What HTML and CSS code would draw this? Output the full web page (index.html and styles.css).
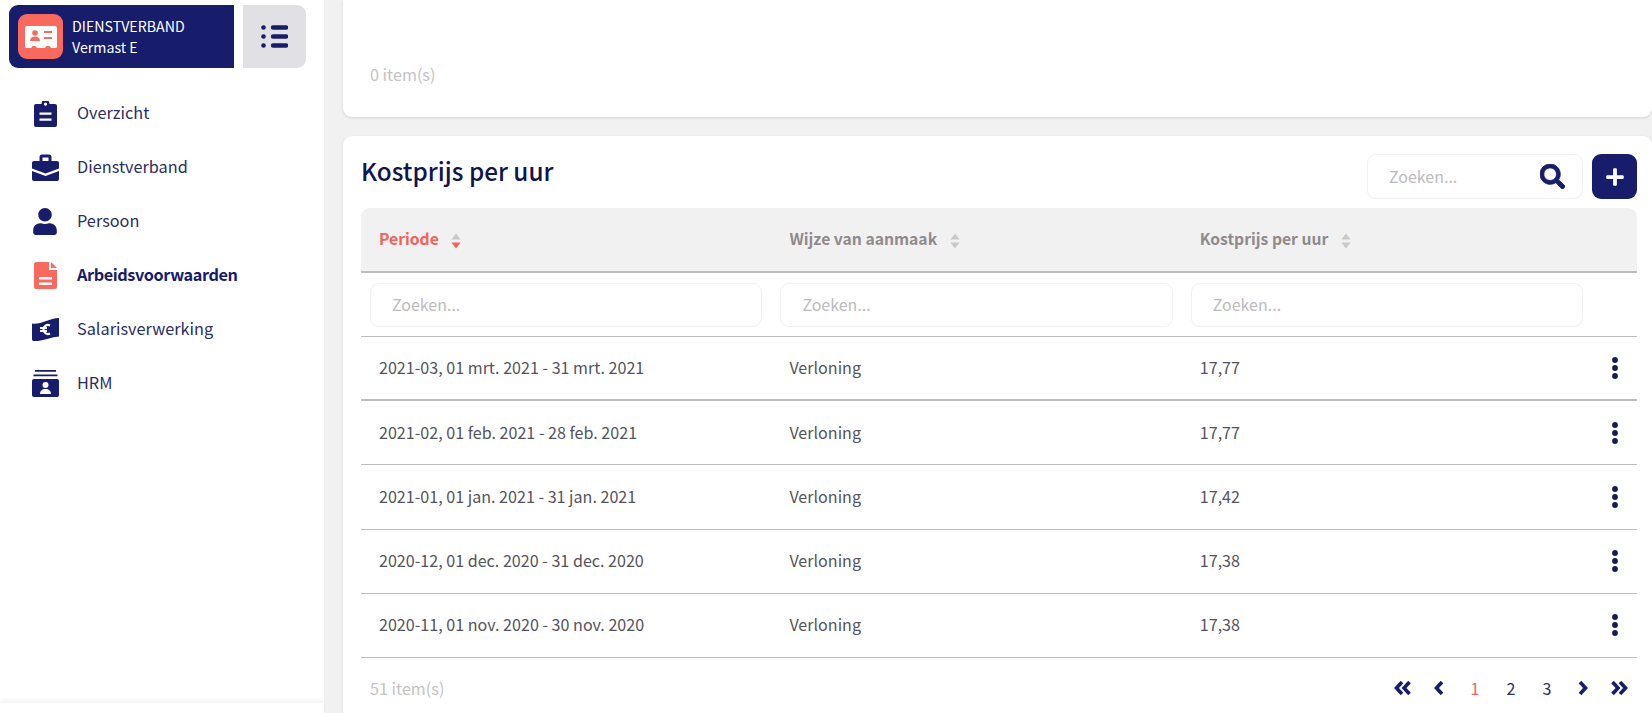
FILE: index.html
```html
<!DOCTYPE html>
<html lang="en">
<head>
    <meta charset="UTF-8">
    <title>Kostprijs per uur</title>
    <link rel="stylesheet" href="styles.css">
</head>
<body>
    <svg class="defs" width="0" height="0">
        <symbol id="dots" viewBox="0 0 8 22">
            <circle cx="4" cy="3" r="2.9"/><circle cx="4" cy="11" r="2.9"/><circle cx="4" cy="19" r="2.9"/>
        </symbol>
        <symbol id="sort" viewBox="0 0 10 16">
            <path class="up" d="M5 0.5L9.6 6.6H0.4z"/><path class="down" d="M5 15.5L9.6 9.4H0.4z"/>
        </symbol>
    </svg>

    <div class="layout">
        <!-- Sidebar -->
        <aside class="sidebar">
            <div class="sidebar-top">
                <div class="context">
                    <div class="context-logo">
                        <svg viewBox="0 0 32 22" width="32" height="22"><path fill="#fff" d="M2 0h28a2 2 0 0 1 2 2v18.500a1.500 1.500 0 0 1-1.500 1.500h-4.500l-1.500-2h-3l-1.500 2h-8l-1.500-2h-3l-1.500 2H1.500A1.500 1.500 0 0 1 0 20.500V2a2 2 0 0 1 2-2z"/><circle cx="10" cy="7" r="2.800" fill="#f96a5e"/><path fill="#f96a5e" d="M5 15c0-3 2-4.500 5-4.500s5 1.500 5 4.500z"/><path stroke="#f96a5e" stroke-width="2" d="M19 6h8M19 12h8"/></svg>
                    </div>
                    <div class="context-text">
                        <div>DIENSTVERBAND</div>
                        <div>Vermast E</div>
                    </div>
                </div>
                <button class="toggle">
                    <svg viewBox="0 0 27 23" width="27" height="23"><circle cx="2.500" cy="2.500" r="2.300"/><circle cx="2.500" cy="11.500" r="2.300"/><circle cx="2.500" cy="20.500" r="2.300"/><path d="M12 .3h13a2.200 2.200 0 0 1 0 4.400H12a2.200 2.200 0 0 1 0-4.400zM12 9.300h13a2.200 2.200 0 0 1 0 4.400H12a2.200 2.200 0 0 1 0-4.400zM12 18.300h13a2.200 2.200 0 0 1 0 4.400H12a2.200 2.200 0 0 1 0-4.400z"/></svg>
                </button>
            </div>
            <ul class="menu">
                <li>
                    <span class="menu-icon"><svg viewBox="0 0 23 26" width="23" height="26"><path fill-rule="evenodd" d="M7.500 3a4 4 0 0 1 8 0h5.500a2 2 0 0 1 2 2v19a2 2 0 0 1-2 2H2a2 2 0 0 1-2-2V5a2 2 0 0 1 2-2zM11.500 1.500a1.600 1.600 0 1 0 0 3.200 1.600 1.600 0 0 0 0-3.200zM5.500 11.500v2.200h12v-2.200zM5.500 17.500v2.200h12v-2.200z"/></svg></span>
                    Overzicht
                </li>
                <li>
                    <span class="menu-icon"><svg viewBox="0 0 27 27" width="27" height="27"><path fill-rule="evenodd" d="M7.500 7V3a2.500 2.500 0 0 1 2.500-2.500h7A2.500 2.500 0 0 1 19.500 3v4H25a2 2 0 0 1 2 2v5.500l-13.500 5-13.500-5V9a2 2 0 0 1 2-2zM10.500 3.500V7h6V3.500z"/><path d="M0 17l13.500 5L27 17v8a2 2 0 0 1-2 2H2a2 2 0 0 1-2-2z"/></svg></span>
                    Dienstverband
                </li>
                <li>
                    <span class="menu-icon"><svg viewBox="0 0 448 512" width="24" height="27"><path d="M224 256c70.700 0 128-57.300 128-128S294.700 0 224 0 96 57.300 96 128s57.300 128 128 128zm89.600 32h-16.700c-22.200 10.200-46.900 16-72.900 16s-50.600-5.800-72.900-16h-16.700C60.200 288 0 348.200 0 422.400V464c0 26.500 21.500 48 48 48h352c26.500 0 48-21.500 48-48v-41.600c0-74.200-60.200-134.400-134.400-134.400z"/></svg></span>
                    Persoon
                </li>
                <li class="active">
                    <span class="menu-icon"><svg viewBox="0 0 23 27" width="23" height="27"><path fill-rule="evenodd" d="M2 0h13v8h8v17a2 2 0 0 1-2 2H2a2 2 0 0 1-2-2V2a2 2 0 0 1 2-2zM5 15v2.500h13V15zM5 20.500V23h13v-2.500z"/><path d="M17 0l6 6h-6z"/></svg></span>
                    Arbeidsvoorwaarden
                </li>
                <li>
                    <span class="menu-icon"><svg viewBox="0 0 27 23" width="27" height="23"><path d="M0 5.500C8 7 17 .5 27 0v18.500C18 19 9 24 1.500 23 .5 23 0 22 0 21z"/><path fill="none" stroke="#fff" stroke-width="2.200" d="M18 7.500c-3-1.500-6.500 .5-6.500 4s3.500 5.500 6.500 4M8 10h7M8 13h7"/></svg></span>
                    Salarisverwerking
                </li>
                <li>
                    <span class="menu-icon"><svg viewBox="0 0 27 27" width="27" height="27"><path d="M3 0h21v1.800H3zM1.500 4.500h24v1.800h-24z"/><path fill-rule="evenodd" d="M2 9h23a2 2 0 0 1 2 2v14a2 2 0 0 1-2 2H2a2 2 0 0 1-2-2V11a2 2 0 0 1 2-2zM13.500 12a3 3 0 1 0 0 6 3 3 0 0 0 0-6zM8 24h11c0-3-2-5-5.500-5S8 21 8 24z"/></svg></span>
                    HRM
                </li>
            </ul>
            <div class="sidebar-foot"></div>
        </aside>

        <main class="content">
            <section class="card card-empty">
                <div class="item-count">0 item(s)</div>
            </section>

            <section class="card">
                <div class="card-head">
                    <h2>Kostprijs per uur</h2>
                    <div class="card-tools">
                        <div class="search">
                            <input type="text" placeholder="Zoeken...">
                            <svg viewBox="0 0 512 512" width="25" height="25"><path d="M505 442.700L405.300 343c-4.500-4.500-10.600-7-17-7H372c27.600-35.300 44-79.700 44-128C416 93.100 322.900 0 208 0S0 93.100 0 208s93.100 208 208 208c48.300 0 92.700-16.400 128-44v16.300c0 6.400 2.500 12.500 7 17l99.700 99.700c9.400 9.400 24.600 9.400 33.900 0l28.300-28.300c9.400-9.400 9.400-24.600.1-34zM208 336c-70.700 0-128-57.200-128-128 0-70.700 57.200-128 128-128 70.700 0 128 57.200 128 128 0 70.700-57.200 128-128 128z"/></svg>
                        </div>
                        <button class="add">
                            <svg viewBox="0 0 448 512" width="18" height="20"><path d="M416 208H272V64c0-17.670-14.330-32-32-32h-32c-17.670 0-32 14.330-32 32v144H32c-17.670 0-32 14.330-32 32v32c0 17.670 14.330 32 32 32h144v144c0 17.670 14.330 32 32 32h32c17.670 0 32-14.330 32-32V304h144c17.670 0 32-14.330 32-32v-32c0-17.670-14.330-32-32-32z"/></svg>
                        </button>
                    </div>
                </div>

                <table class="grid">
                    <thead>
                        <tr class="head-row">
                            <th class="sorted">Periode <svg class="sort-icon"><use href="#sort"/></svg></th>
                            <th>Wijze van aanmaak <svg class="sort-icon"><use href="#sort"/></svg></th>
                            <th>Kostprijs per uur <svg class="sort-icon"><use href="#sort"/></svg></th>
                            <th class="col-actions"></th>
                        </tr>
                        <tr class="filter-row">
                            <td><input type="text" placeholder="Zoeken..."></td>
                            <td><input type="text" placeholder="Zoeken..."></td>
                            <td><input type="text" placeholder="Zoeken..."></td>
                            <td></td>
                        </tr>
                    </thead>
                    <tbody>
                        <tr class="row-latest">
                            <td>2021-03, 01 mrt. 2021 - 31 mrt. 2021</td>
                            <td>Verloning</td>
                            <td>17,77</td>
                            <td class="col-actions"><svg class="dots"><use href="#dots"/></svg></td>
                        </tr>
                        <tr>
                            <td>2021-02, 01 feb. 2021 - 28 feb. 2021</td>
                            <td>Verloning</td>
                            <td>17,77</td>
                            <td class="col-actions"><svg class="dots"><use href="#dots"/></svg></td>
                        </tr>
                        <tr>
                            <td>2021-01, 01 jan. 2021 - 31 jan. 2021</td>
                            <td>Verloning</td>
                            <td>17,42</td>
                            <td class="col-actions"><svg class="dots"><use href="#dots"/></svg></td>
                        </tr>
                        <tr>
                            <td>2020-12, 01 dec. 2020 - 31 dec. 2020</td>
                            <td>Verloning</td>
                            <td>17,38</td>
                            <td class="col-actions"><svg class="dots"><use href="#dots"/></svg></td>
                        </tr>
                        <tr>
                            <td>2020-11, 01 nov. 2020 - 30 nov. 2020</td>
                            <td>Verloning</td>
                            <td>17,38</td>
                            <td class="col-actions"><svg class="dots"><use href="#dots"/></svg></td>
                        </tr>
                    </tbody>
                </table>

                <div class="card-foot">
                    <div class="item-count">51 item(s)</div>
                    <div class="pager">
                        <span><svg viewBox="0 0 18 14" width="18" height="14"><path d="M8 1L2.500 7 8 13M15.500 1L10 7l5.500 6"/></svg></span>
                        <span><svg viewBox="0 0 10 14" width="10" height="14"><path d="M8 1L2.500 7 8 13"/></svg></span>
                        <span class="current">1</span>
                        <span>2</span>
                        <span>3</span>
                        <span><svg viewBox="0 0 10 14" width="10" height="14"><path d="M2 1l5.500 6L2 13"/></svg></span>
                        <span><svg viewBox="0 0 18 14" width="18" height="14"><path d="M2.500 1L8 7l-5.500 6M10 1l5.500 6-5.500 6"/></svg></span>
                    </div>
                </div>
            </section>
        </main>
    </div>
</body>
</html>
```

FILE: styles.css
```css
* {
    margin: 0;
    padding: 0;
    box-sizing: border-box;
}

body {
    height: 713px;
    overflow: hidden;
    font-family: "Noto Sans CJK JP", "Noto Sans", sans-serif;
    font-size: 16px;
    line-height: 22px;
    color: #54545c;
    background: #f1f1f1;
}

input {
    font-family: inherit;
    font-size: 16px;
    color: #54545c;
    outline: none;
}

input::placeholder {
    color: #bdbbbd;
    opacity: 1;
}

button {
    border: none;
    cursor: pointer;
}

.defs {
    position: absolute;
}

.layout {
    display: flex;
    height: 713px;
}

/* Sidebar */
.sidebar {
    width: 324px;
    flex-shrink: 0;
    display: flex;
    flex-direction: column;
    background: #fff;
}

.sidebar-top {
    display: flex;
    gap: 9px;
    padding: 5px 18px 0 9px;
}

.context {
    width: 225px;
    height: 63px;
    display: flex;
    align-items: center;
    gap: 9px;
    padding-left: 9px;
    background: #171c6b;
    border-radius: 9px 0 0 9px;
    color: #fff;
    font-size: 14.2px;
    line-height: 21px;
}

.context-logo {
    width: 45px;
    height: 45px;
    display: flex;
    align-items: center;
    justify-content: center;
    background: #f96a5e;
    border-radius: 9px;
}

.toggle {
    width: 63px;
    height: 63px;
    display: flex;
    align-items: center;
    justify-content: center;
    background: #e1e0e4;
    border-radius: 0 9px 9px 0;
    fill: #171c6b;
}

.menu {
    flex: 1;
    list-style: none;
    padding-top: 17px;
}

.menu li {
    height: 54px;
    display: flex;
    align-items: center;
    padding-left: 31px;
    font-size: 16.3px;
    color: #2b2e62;
}

.menu-icon {
    width: 28px;
    height: 28px;
    margin: 3px 18px 0 0;
    display: flex;
    align-items: center;
    justify-content: center;
    fill: #171c6b;
}

.menu li.active {
    font-weight: 700;
    letter-spacing: -0.43px;
    color: #171c6b;
}

.menu li.active .menu-icon {
    fill: #f96a5e;
}

.sidebar-foot {
    height: 10px;
    background: #fff;
    box-shadow: 0 -3px 4px rgba(0,0,0,0.05);
}

/* Cards */
.content {
    flex: 1;
    min-width: 0;
    padding-left: 19px;
}

.card {
    background: #fff;
    padding: 18px 15px 0 18px;
    border-radius: 9px;
    box-shadow: 0 1px 3px rgba(0,0,0,0.12);
}

.card-empty {
    height: 117px;
    margin-bottom: 19px;
    padding-top: 63px;
    border-radius: 0 0 9px 9px;
}

.item-count {
    padding-left: 9px;
    color: #c4c2c4;
    font-size: 16.2px;
}

.card-head {
    display: flex;
    justify-content: space-between;
    height: 45px;
    margin-bottom: 9px;
}

.card-head h2 {
    font-size: 24.3px;
    line-height: 34px;
    font-weight: 500;
    color: #10144f;
}

.card-tools {
    display: flex;
    gap: 9px;
}

.search {
    width: 216px;
    height: 45px;
    display: flex;
    align-items: center;
    padding: 0 17px 0 21px;
    border: 1px solid #f1f1f3;
    border-radius: 9px;
    fill: #171c6b;
    stroke: #171c6b;
    stroke-width: 16;
}

.search input {
    flex: 1;
    min-width: 0;
    padding-bottom: 2px;
    border: none;
    background: none;
}

.add {
    width: 45px;
    height: 45px;
    display: flex;
    align-items: center;
    justify-content: center;
    background: #171c6b;
    border-radius: 9px;
    fill: #fff;
}

/* Table */
.grid {
    width: 1276px;
    table-layout: fixed;
    border-collapse: separate;
    border-spacing: 0;
}

.grid th,
.grid td {
    width: 410.4px;
    text-align: left;
}

.grid .col-actions {
    width: 44.8px;
}

.head-row th {
    height: 65px;
    padding: 0 0 2px 18px;
    background: #f1f1f1;
    border-bottom: 2px solid #bcbcbc;
    font-weight: 700;
    font-size: 15.7px;
    color: #8f8a8c;
}

.head-row th:first-child {
    border-top-left-radius: 9px;
}

.head-row th:last-child {
    border-top-right-radius: 9px;
}

.head-row th.sorted {
    color: #f0645a;
    --sort-down: #f0645a;
}

.sort-icon {
    width: 10px;
    height: 16px;
    margin-left: 9px;
    vertical-align: -4px;
    fill: #c9c9cb;
}

.down {
    fill: var(--sort-down, #c9c9cb);
}

.filter-row td {
    height: 64px;
    padding: 0 9px;
    border-bottom: 1px solid #bcbcbc;
}

.filter-row input {
    display: block;
    width: 100%;
    height: 44px;
    padding: 0 21px 2px;
    border: 1px solid #f1f1f3;
    border-radius: 9px;
}

tbody td {
    height: 64.2px;
    padding: 0 0 2px 18px;
    font-size: 16.1px;
    border-bottom: 1px solid #bcbcbc;
}

tbody .row-latest td {
    border-bottom-width: 2px;
}

tbody .col-actions {
    padding: 0;
    text-align: center;
}

.dots {
    display: block;
    width: 8px;
    height: 22px;
    margin-left: 19px;
    fill: #171c50;
}

/* Footer */
.card-foot {
    height: 62px;
    padding-bottom: 2px;
    display: flex;
    justify-content: space-between;
    align-items: center;
}

.pager {
    display: flex;
    color: #2b2e62;
}

.pager span {
    width: 36px;
    display: flex;
    align-items: center;
    justify-content: center;
}

.pager svg {
    fill: none;
    stroke: #171c6b;
    stroke-width: 3.6;
}

.pager .current {
    color: #f0645a;
}
```
